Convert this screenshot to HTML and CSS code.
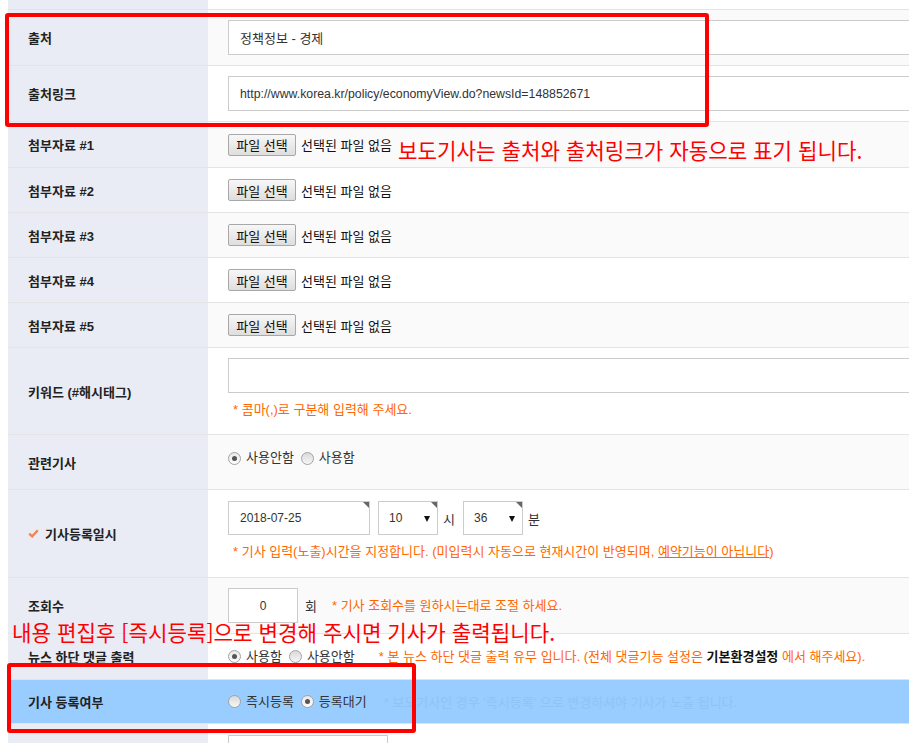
FILE: index.html
```html
<!DOCTYPE html>
<html lang="ko">
  <head>
    <meta charset="UTF-8" />
    <title>기사 편집</title>
    <link rel="stylesheet" href="styles.css">
  </head>
  <body>
    <div class="form">
      <div class="row row-top">
        <div class="th"></div>
        <div class="td"></div>
      </div>

      <div class="row row-input">
        <div class="th">출처</div>
        <div class="td">
          <input class="field field-wide" type="text" value="정책정보 - 경제">
        </div>
      </div>

      <div class="row row-input">
        <div class="th">출처링크</div>
        <div class="td">
          <input class="field field-wide field-latin" type="text" value="http://www.korea.kr/policy/economyView.do?newsId=148852671">
        </div>
      </div>

      <!-- 첨부자료 -->
      <div class="row row-file row-file-first">
        <div class="th">첨부자료 #1</div>
        <div class="td"><span class="file-btn">파일 선택</span><span class="file-name">선택된 파일 없음</span></div>
      </div>
      <div class="row row-file">
        <div class="th">첨부자료 #2</div>
        <div class="td"><span class="file-btn">파일 선택</span><span class="file-name">선택된 파일 없음</span></div>
      </div>
      <div class="row row-file">
        <div class="th">첨부자료 #3</div>
        <div class="td"><span class="file-btn">파일 선택</span><span class="file-name">선택된 파일 없음</span></div>
      </div>
      <div class="row row-file">
        <div class="th">첨부자료 #4</div>
        <div class="td"><span class="file-btn">파일 선택</span><span class="file-name">선택된 파일 없음</span></div>
      </div>
      <div class="row row-file">
        <div class="th">첨부자료 #5</div>
        <div class="td"><span class="file-btn">파일 선택</span><span class="file-name">선택된 파일 없음</span></div>
      </div>

      <div class="row row-keyword">
        <div class="th">키워드 (#해시태그)</div>
        <div class="td td-stack">
          <input class="field field-wide" type="text" value="">
          <p class="help">* 콤마(,)로 구분해 입력해 주세요.</p>
        </div>
      </div>

      <div class="row row-related">
        <div class="th">관련기사</div>
        <div class="td td-top">
          <span class="radio on"><i></i>사용안함</span>
          <span class="radio"><i></i>사용함</span>
        </div>
      </div>

      <div class="row row-date">
        <div class="th"><svg class="check" width="11" height="9" viewBox="0 0 11 9"><path d="M1.2 4.6 L4.2 7.4 L9.8 1.2" fill="none" stroke="#f7844f" stroke-width="2.4"/></svg>기사등록일시</div>
        <div class="td td-stack">
          <div class="date-line">
            <span class="box box-date">2018-07-25</span>
            <span class="box box-select">10<b class="arrow"></b></span>
            <span class="unit">시</span>
            <span class="box box-select">36<b class="arrow"></b></span>
            <span class="unit">분</span>
          </div>
          <p class="help">* 기사 입력(노출)시간을 지정합니다. (미입력시 자동으로 현재시간이 반영되며, <u>예약기능이 아닙니다</u>)</p>
        </div>
      </div>

      <div class="row row-input">
        <div class="th">조회수</div>
        <div class="td">
          <input class="field field-count" type="text" value="0">
          <span class="unit unit-count">회</span>
          <span class="help">* 기사 조회수를 원하시는대로 조절 하세요.</span>
        </div>
      </div>

      <div class="row row-comment">
        <div class="th">뉴스 하단 댓글 출력</div>
        <div class="td">
          <span class="radio on"><i></i>사용함</span>
          <span class="radio"><i></i>사용안함</span>
          <span class="help help-comment">* 본 뉴스 하단 댓글 출력 유무 입니다. (전체 댓글기능 설정은 <strong>기본환경설정</strong> 에서 해주세요).</span>
        </div>
      </div>

      <div class="row row-status">
        <div class="th">기사 등록여부</div>
        <div class="td">
          <span class="radio"><i></i>즉시등록</span>
          <span class="radio on"><i></i>등록대기</span>
          <span class="faint">* 보도기사인 경우 '즉시등록' 으로 변경하셔야 기사가 노출 됩니다.</span>
        </div>
      </div>

      <div class="row row-last">
        <div class="th"></div>
        <div class="td td-top"><span class="box box-last"></span></div>
      </div>
    </div>

    <!-- annotations drawn over the form -->
    <div class="mark mark-source"></div>
    <div class="mark mark-status"></div>
    <p class="note note-source">보도기사는 출처와 출처링크가 자동으로 표기 됩니다.</p>
    <p class="note note-status">내용 편집후 [즉시등록]으로 변경해 주시면 기사가 출력됩니다.</p>
  </body>
</html>
```

FILE: styles.css
```css
* {
  box-sizing: border-box;
}

html,
body {
  margin: 0;
  padding: 0;
}

body {
  position: relative;
  width: 909px;
  height: 743px;
  overflow: hidden;
  font-family: "Liberation Sans", "Noto Sans CJK KR", sans-serif;
  font-size: 13px;
  color: #333;
  background: #fff;
}

.form {
  margin-left: 8px;
}

.row {
  display: flex;
  border-bottom: 1px solid #e4e4e4;
}

.th {
  flex: none;
  width: 200px;
  padding-left: 20px;
  display: flex;
  align-items: center;
  font-weight: bold;
  color: #222;
  background: #e9ecf4;
}

.td {
  flex: 1;
  min-width: 0;
  padding: 0 20px;
  display: flex;
  align-items: center;
  background: #fff;
}

.row:nth-child(even) .td {
  background: #fafafa;
}

.td-stack {
  flex-direction: column;
  align-items: flex-start;
  justify-content: flex-start;
}

.td-top {
  align-items: flex-start;
}

/* row heights */
.row-top { height: 10px; }
.row-input { height: 56px; }
.row-file { height: 45px; }
.row-file-first { height: 46px; }
.row-keyword { height: 87px; }
.row-related { height: 55px; }
.row-date { height: 88px; }
.row-comment { height: 46px; }
.row-status { height: 44px; }
.row-last { height: 40px; }

/* inputs */
.field {
  height: 35px;
  padding: 0 11px;
  border: 1px solid #ccc;
  border-radius: 0;
  background: #fff;
  font-family: inherit;
  font-size: 13px;
  color: #333;
  outline: none;
}

.field-latin {
  font-size: 12.3px;
}

.field-wide {
  flex: none;
  width: 700px;
}

.field-count {
  width: 70px;
  text-align: center;
  padding: 0;
  font-size: 12px;
}

.row-keyword .td {
  padding-top: 10px;
}

.help {
  margin: 0;
  color: #f60;
  line-height: 18px;
}

.row-keyword .help {
  margin: 8px 0 0 5px;
}

/* file buttons */
.file-btn {
  width: 68px;
  height: 22px;
  display: inline-flex;
  align-items: center;
  justify-content: center;
  border: 1px solid #a8a8a8;
  border-radius: 2px;
  background: linear-gradient(#f7f7f7, #dedede);
  color: #111;
}

.file-name {
  margin-left: 5px;
  color: #111;
}

/* radios */
.radio {
  display: inline-flex;
  align-items: center;
  margin-right: 7px;
  line-height: 18px;
  color: #333;
}

.radio i {
  width: 13px;
  height: 13px;
  margin-right: 5px;
  display: grid;
  place-items: center;
  border: 1px solid #a3a3a3;
  border-radius: 50%;
  background: linear-gradient(#d9d9d9, #f6f6f6);
}

.radio.on i {
  background: linear-gradient(#e8e8e8, #fdfdfd);
}

.radio.on i::after {
  content: "";
  width: 5px;
  height: 5px;
  border-radius: 50%;
  background: #555;
}

.row-related .td {
  padding-top: 14px;
}

/* date / time */
.th .check {
  margin-right: 6px;
}

.row-date .td {
  padding-top: 11px;
}

.date-line {
  display: flex;
  align-items: center;
}

.box {
  position: relative;
  height: 34px;
  display: inline-flex;
  align-items: center;
  padding-left: 11px;
  border: 1px solid #ccc;
  background: #fff;
  font-size: 12px;
  color: #333;
}

.box-date {
  width: 142px;
}

.box-select {
  width: 60px;
  margin-left: 8px;
  padding-left: 10px;
}

.box-date::after,
.box-select::after {
  content: "";
  position: absolute;
  top: 0;
  right: 0;
  border-top: 6px solid #666;
  border-left: 6px solid transparent;
}

.arrow {
  position: absolute;
  right: 7px;
  top: 14px;
  border-top: 6px solid #111;
  border-left: 3px solid transparent;
  border-right: 3px solid transparent;
}

.unit {
  margin-left: 5px;
  color: #333;
}

.row-date .help {
  margin: 8px 0 0 5px;
}

.unit-count {
  margin-left: 7px;
}

.unit-count + .help {
  margin-left: 15px;
}

.help-comment {
  margin-left: 17px;
}

.help strong {
  color: #111;
}

/* register status row */
.row.row-status .th,
.row.row-status .td {
  background: #99ccff;
}

.faint {
  margin-left: 10px;
  color: #90c3f5;
}

.row-last .td {
  padding-top: 11px;
}

.box-last {
  width: 160px;
  height: 34px;
}

/* red annotations */
.mark {
  position: absolute;
  border: 4px solid #f00;
  border-radius: 3px;
}

.mark-source {
  left: 5px;
  top: 13px;
  width: 704px;
  height: 114px;
}

.mark-status {
  left: 7px;
  top: 663px;
  width: 409px;
  height: 70px;
}

.note {
  position: absolute;
  margin: 0;
  font-family: "Noto Sans CJK KR", sans-serif;
  font-size: 21.2px;
  line-height: 24px;
  color: #f00;
  white-space: nowrap;
}

.note-source {
  left: 398px;
  top: 138px;
}

.note-status {
  left: 12px;
  top: 620px;
}
```
